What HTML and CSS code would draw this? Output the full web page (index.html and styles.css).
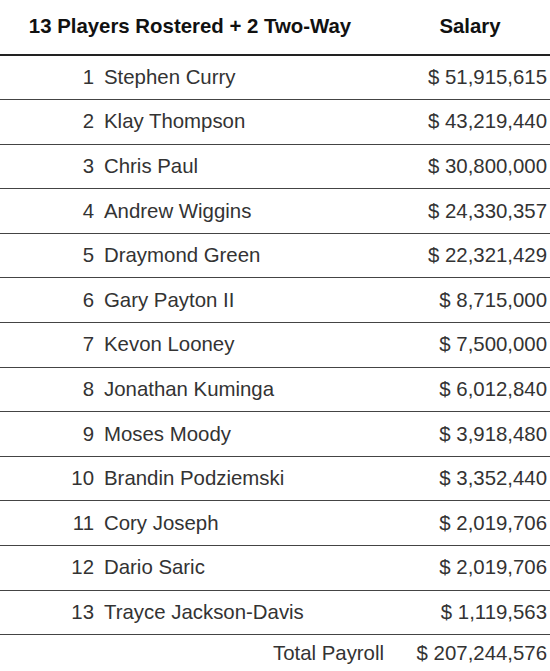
FILE: index.html
```html
<!DOCTYPE html>
<html>
<head>
<meta charset="utf-8">
<link rel="stylesheet" href="styles.css">
</head>
<body>
<table class="roster">
  <colgroup>
    <col class="c-num">
    <col class="c-name">
    <col class="c-sal">
  </colgroup>
  <thead>
    <tr class="head">
      <th colspan="2" class="head-players">13 Players Rostered + 2 Two-Way</th>
      <th>Salary</th>
    </tr>
  </thead>
  <tbody>
    <tr><td class="num">1</td><td class="name">Stephen Curry</td><td class="sal">$ 51,915,615</td></tr>
    <tr><td class="num">2</td><td class="name">Klay Thompson</td><td class="sal">$ 43,219,440</td></tr>
    <tr><td class="num">3</td><td class="name">Chris Paul</td><td class="sal">$ 30,800,000</td></tr>
    <tr><td class="num">4</td><td class="name">Andrew Wiggins</td><td class="sal">$ 24,330,357</td></tr>
    <tr><td class="num">5</td><td class="name">Draymond Green</td><td class="sal">$ 22,321,429</td></tr>
    <tr><td class="num">6</td><td class="name">Gary Payton II</td><td class="sal">$ 8,715,000</td></tr>
    <tr><td class="num">7</td><td class="name">Kevon Looney</td><td class="sal">$ 7,500,000</td></tr>
    <tr><td class="num">8</td><td class="name">Jonathan Kuminga</td><td class="sal">$ 6,012,840</td></tr>
    <tr><td class="num">9</td><td class="name">Moses Moody</td><td class="sal">$ 3,918,480</td></tr>
    <tr><td class="num">10</td><td class="name">Brandin Podziemski</td><td class="sal">$ 3,352,440</td></tr>
    <tr><td class="num">11</td><td class="name">Cory Joseph</td><td class="sal">$ 2,019,706</td></tr>
    <tr><td class="num">12</td><td class="name">Dario Saric</td><td class="sal">$ 2,019,706</td></tr>
    <tr><td class="num">13</td><td class="name">Trayce Jackson-Davis</td><td class="sal">$ 1,119,563</td></tr>
  </tbody>
  <tfoot>
    <tr class="total"><td colspan="2" class="total-label">Total Payroll</td><td class="sal">$ 207,244,576</td></tr>
  </tfoot>
</table>
</body>
</html>
```

FILE: styles.css
```css
html, body {
  margin: 0;
  padding: 0;
  background: #ffffff;
}
body {
  font-family: "Liberation Sans", Arial, sans-serif;
  color: #333333;
}
.roster {
  width: 550px;
  border-collapse: collapse;
  table-layout: fixed;
  font-size: 20.4px;
}
.c-num { width: 100px; }
.c-name { width: 290px; }
.c-sal { width: 160px; }
.roster th {
  font-weight: bold;
  color: #111111;
  text-align: center;
  height: 53.5px;
  padding: 0;
  border-bottom: 2px solid #222222;
  vertical-align: middle;
}
.roster th.head-players {
  padding-right: 10px;
}
.roster tbody td {
  height: 43.6px;
  padding: 0;
  border-bottom: 1px solid #444444;
  vertical-align: middle;
}
.num {
  text-align: right;
  padding-right: 6px !important;
}
.name {
  text-align: left;
  padding-left: 4px !important;
}
.sal {
  text-align: right;
  padding-right: 3px !important;
}
.total td {
  height: 36px;
  padding: 0;
  vertical-align: middle;
}
.total-label {
  text-align: right;
  padding-right: 6px !important;
}
```
